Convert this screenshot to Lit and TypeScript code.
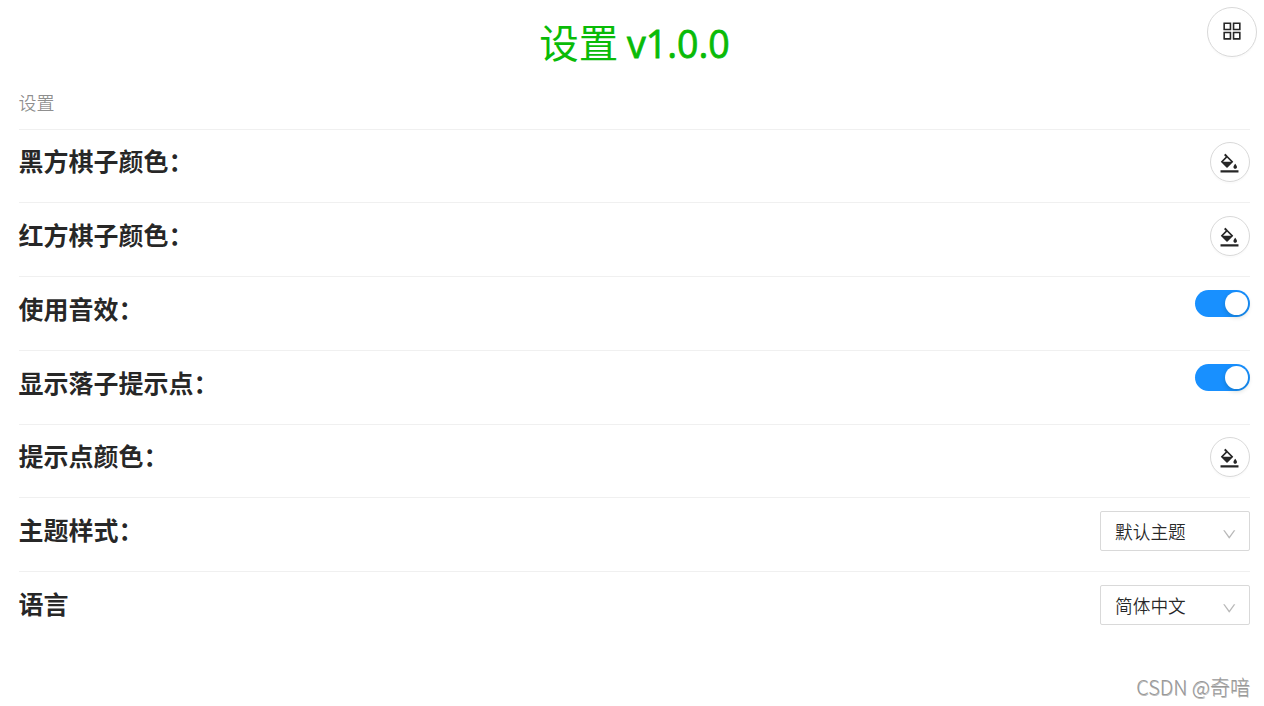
import { css, html, LitElement, svg } from 'lit'
import { customElement, property } from 'lit/decorators.js'

const icons: Record<string, string> = {
  appstore:
    'M464 144H160c-8.800 0-16 7.200-16 16v304c0 8.800 7.200 16 16 16h304c8.800 0 16-7.200 16-16V160c0-8.800-7.200-16-16-16zm-52 268H212V212h200v200zm452-268H560c-8.800 0-16 7.200-16 16v304c0 8.800 7.200 16 16 16h304c8.800 0 16-7.200 16-16V160c0-8.800-7.200-16-16-16zm-52 268H612V212h200v200zM464 544H160c-8.800 0-16 7.200-16 16v304c0 8.800 7.200 16 16 16h304c8.800 0 16-7.200 16-16V560c0-8.800-7.200-16-16-16zm-52 268H212V612h200v200zm452-268H560c-8.800 0-16 7.200-16 16v304c0 8.800 7.200 16 16 16h304c8.800 0 16-7.200 16-16V560c0-8.800-7.200-16-16-16zm-52 268H612V612h200v200z',
  bgColors:
    'M766.4 744.3c43.7 0 79.4-36.2 79.4-80.5 0-53.5-79.4-140.8-79.4-140.8S687 610.3 687 663.8c0 44.3 35.7 80.5 79.4 80.5zm-377.1-44.1c7.1 7.1 18.6 7.1 25.6 0l256.1-256c7.1-7.1 7.1-18.6 0-25.6l-256-256c-.6-.6-1.3-1.2-2-1.7l-78.2-78.2a9.11 9.11 0 00-12.8 0l-48 48a9.11 9.11 0 000 12.8l67.2 67.2-207.8 207.9c-7.1 7.1-7.1 18.6 0 25.6l255.9 256zm12.9-448.6l178.9 178.9H223.4l178.8-178.9zM904 816H120c-4.4 0-8 3.6-8 8v80c0 4.4 3.6 8 8 8h784c4.4 0 8-3.6 8-8v-80c0-4.4-3.6-8-8-8z',
  down:
    'M884 256h-75c-5.1 0-9.9 2.5-12.9 6.6L512 654.2 227.9 262.6c-3-4.1-7.8-6.6-12.9-6.6h-75c-6.5 0-10.3 7.4-6.5 12.7l352.6 486.1c12.8 17.6 39 17.6 51.7 0l352.6-486.1c3.9-5.3.1-12.7-6.4-12.7z',
}

const icon = (name: string) => html`
  <svg viewBox="0 0 1024 1024" fill="currentColor" aria-hidden="true">
    ${svg`<path d=${icons[name]}></path>`}
  </svg>
`

@customElement('x-round-button')
export class RoundButton extends LitElement {
  @property() icon = 'bgColors'
  @property({ reflect: true }) size = 'middle'

  static styles = css`
    :host {
      display: block;
    }

    .button {
      display: flex;
      align-items: center;
      justify-content: center;
      box-sizing: border-box;
      width: 40px;
      height: 40px;
      padding: 2px 1px 0 0;
      border: 1px solid #d9d9d9;
      border-radius: 50%;
      background: #fff;
      color: rgba(0, 0, 0, 0.85);
      box-shadow: 0 2px 0 rgba(0, 0, 0, 0.015);
      cursor: pointer;
    }

    :host([size='large']) .button {
      width: 50px;
      height: 50px;
      padding: 0 0 2px;
    }

    svg {
      width: 23px;
      height: 23px;
    }

    :host([size='large']) svg {
      width: 24px;
      height: 24px;
    }
  `

  render() {
    return html`<button class="button">${icon(this.icon)}</button>`
  }
}

@customElement('x-switch')
export class Switch extends LitElement {
  @property({ type: Boolean, reflect: true }) checked = false

  static styles = css`
    :host {
      display: block;
    }

    .track {
      display: flex;
      align-items: center;
      box-sizing: border-box;
      width: 55px;
      height: 27px;
      padding: 0 2px;
      border: 0;
      border-radius: 14px;
      background: rgba(0, 0, 0, 0.25);
      cursor: pointer;
    }

    :host([checked]) .track {
      justify-content: flex-end;
      background: #1890ff;
    }

    .handle {
      width: 23px;
      height: 23px;
      border-radius: 50%;
      background: #fff;
      box-shadow: 0 2px 5px rgba(0, 35, 11, 0.2);
    }
  `

  #toggle() {
    this.checked = !this.checked
  }

  render() {
    return html`
      <button class="track" role="switch" @click="${this.#toggle}">
        <div class="handle"></div>
      </button>
    `
  }
}

@customElement('x-select')
export class Select extends LitElement {
  @property() value = ''

  static styles = css`
    .select {
      display: flex;
      align-items: center;
      justify-content: space-between;
      box-sizing: border-box;
      width: 150px;
      height: 40px;
      padding: 0 12px 0 14px;
      border: 1px solid #d9d9d9;
      border-radius: 2px;
      background: #fff;
      color: rgba(0, 0, 0, 0.85);
      font-size: 17.7px;
      font-weight: 350;
      line-height: 36px;
      cursor: pointer;
    }

    svg {
      width: 16.5px;
      height: 16.5px;
      margin-top: 6px;
      color: rgba(0, 0, 0, 0.28);
    }
  `

  render() {
    return html`
      <div class="select">
        <span>${this.value}</span>
        ${icon('down')}
      </div>
    `
  }
}

const colorButton = html`<x-round-button></x-round-button>`

const rows = [
  { label: '黑方棋子颜色：', control: colorButton },
  { label: '红方棋子颜色：', control: colorButton },
  { label: '使用音效：', control: html`<x-switch checked></x-switch>` },
  { label: '显示落子提示点：', control: html`<x-switch checked></x-switch>` },
  { label: '提示点颜色：', control: colorButton },
  { label: '主题样式：', control: html`<x-select value="默认主题"></x-select>` },
  { label: '语言', control: html`<x-select value="简体中文"></x-select>` },
]

@customElement('app-root')
export class AppRoot extends LitElement {
  static styles = css`
    :host {
      display: block;
      position: relative;
      box-sizing: border-box;
      height: 706px;
      padding: 0 14px 0 19px;
      overflow: hidden;
      background: #fff;
      color: rgba(0, 0, 0, 0.85);
      font-family: 'Noto Sans CJK SC', sans-serif;
    }

    .title {
      margin: 0;
      height: 88.7px;
      line-height: 82px;
      color: #09bb07;
      font-size: 39.5px;
      font-weight: 400;
      text-align: center;
    }

    .version {
      font-family: 'Open Sans', sans-serif;
      font-size: 37.5px;
      -webkit-text-stroke: 0.8px currentColor;
    }

    .menu {
      position: absolute;
      top: 7px;
      right: 7px;
    }

    .caption {
      height: 40px;
      margin-left: -0.5px;
      line-height: 27px;
      color: rgba(0, 0, 0, 0.45);
      font-size: 18px;
      font-weight: 350;
    }

    .row {
      display: flex;
      justify-content: space-between;
      align-items: flex-start;
      box-sizing: border-box;
      height: 73.75px;
      padding-top: 12.6px;
      border-top: 1px solid #f0f0f0;
    }

    .label {
      margin-left: -0.5px;
      font-size: 25px;
      font-weight: 700;
      line-height: 37px;
    }

    .watermark {
      position: absolute;
      right: 14px;
      bottom: 5px;
      color: #999;
      font-size: 20px;
      font-weight: 300;
      line-height: 28px;
      text-shadow: 0.5px 0.5px 0 #bbb;
    }
  `

  render() {
    return html`
      <h1 class="title">设置 <span class="version">v1.0.0</span></h1>
      <x-round-button class="menu" icon="appstore" size="large"></x-round-button>
      <div class="caption">设置</div>
      ${rows.map(
        (row) => html`
          <div class="row">
            <div class="label">${row.label}</div>
            ${row.control}
          </div>
        `
      )}
      <div class="watermark">CSDN @奇喑</div>
    `
  }
}
